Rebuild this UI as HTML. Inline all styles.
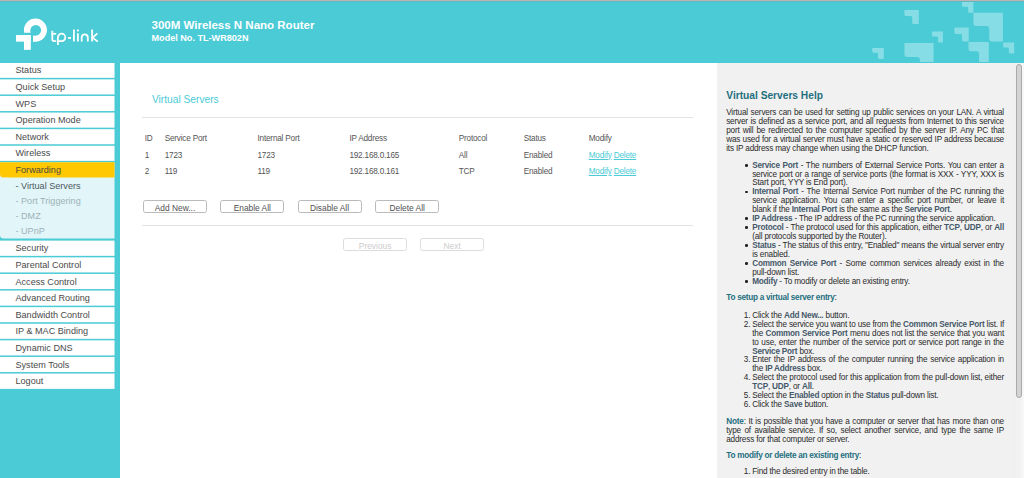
<!DOCTYPE html>
<html><head><meta charset="utf-8"><title>TP-Link</title>
<style>
html,body{margin:0;padding:0;width:1024px;height:478px;overflow:hidden;background:#fff;position:relative;font-family:'Liberation Sans',sans-serif}
b{font-weight:bold}
u{text-decoration:underline}
</style></head><body>
<svg style="position:absolute;left:0;top:0" width="120" height="478" viewBox="0 0 120 478"><rect x="0" y="62" width="120" height="416" fill="#4acbd6"/><rect x="0" y="62.50" width="114.5" height="15.35" fill="#fff"/><rect x="0" y="79.35" width="114.5" height="15.10" fill="#fff"/><rect x="0" y="95.95" width="114.5" height="15.10" fill="#fff"/><rect x="0" y="112.55" width="114.5" height="15.10" fill="#fff"/><rect x="0" y="129.15" width="114.5" height="15.10" fill="#fff"/><rect x="0" y="145.75" width="114.5" height="15.10" fill="#fff"/><path d="M0,162.35 H114.5 V238.6 H3.5 Q0,238.6 0,235.1 Z" fill="#e2f5f8"/><path d="M0,162.35 H114.5 V177.6 H3.5 Q0,177.6 0,174.1 Z" fill="#ffc800"/><rect x="0" y="240.60" width="114.5" height="15.25" fill="#fff"/><rect x="0" y="257.35" width="114.5" height="15.10" fill="#fff"/><rect x="0" y="273.95" width="114.5" height="15.10" fill="#fff"/><rect x="0" y="290.55" width="114.5" height="15.10" fill="#fff"/><rect x="0" y="307.15" width="114.5" height="15.10" fill="#fff"/><rect x="0" y="323.75" width="114.5" height="15.10" fill="#fff"/><rect x="0" y="340.35" width="114.5" height="15.10" fill="#fff"/><rect x="0" y="356.95" width="114.5" height="15.10" fill="#fff"/><rect x="0" y="373.55" width="114.5" height="15.35" fill="#fff"/></svg><div style="position:absolute;left:0;top:0;width:1024px;height:1px;background:#bcb5b5"></div>
<div style="position:absolute;left:0;top:1px;width:1024px;height:1px;background:#5fb9c3;z-index:2"></div>
<div style="position:absolute;left:0;top:1px;width:1024px;height:61.5px;background:#4acbd6;overflow:hidden">
<svg style="position:absolute;left:0;top:-1px" width="1024" height="62" viewBox="0 0 1024 62"><g fill="#86dde5"><path d="M904.4,9.9 H918.8 V24.1 H913.7 Q912.2,24.1 912.2,22.6 V17.6 Q912.2,16.1 910.7,16.1 H905.9 Q904.4,16.1 904.4,14.600000000000001 Z"/><path d="M932.0,31.4 H942.9 V42.5 H939.2 Q938.0,42.5 938.0,41.3 V37.6 Q938.0,36.4 936.8,36.4 H933.2 Q932.0,36.4 932.0,35.199999999999996 Z"/><path d="M904.4,43.1 H933.6 V70 H922.9 Q919.9,70 919.9,67 V59.9 Q919.9,56.9 916.9,56.9 H907.4 Q904.4,56.9 904.4,53.9 Z"/><path d="M872.3,47.9 H883.8 V58.9 H879.2 Q878.0,58.9 878.0,57.699999999999996 V54.0 Q878.0,52.8 876.8,52.8 H873.5 Q872.3,52.8 872.3,51.599999999999994 Z"/><path d="M962.1,-2 H973.4 V12.7 H969.3000000000001 Q968.1,12.7 968.1,11.5 V7.9 Q968.1,6.7 966.9,6.7 H963.3000000000001 Q962.1,6.7 962.1,5.5 Z"/><path d="M973.4,12.7 H1002.9 V41.5 H992.2 Q989.2,41.5 989.2,38.5 V29.1 Q989.2,26.1 986.2,26.1 H976.4 Q973.4,26.1 973.4,23.1 Z"/><path d="M954.4,27.4 H968.7 V41.5 H963.6 Q962.1,41.5 962.1,40.0 V35.6 Q962.1,34.1 960.6,34.1 H955.9 Q954.4,34.1 954.4,32.6 Z"/><path d="M968.5,42.1 H988.8 V70 H981.5 Q979.0,70 979.0,67.5 V53.7 Q979.0,51.2 976.5,51.2 H971.0 Q968.5,51.2 968.5,48.7 Z"/><path d="M1003.1,42.5 H1014.2 V53.5 H1010.1 Q1008.9,53.5 1008.9,52.3 V48.7 Q1008.9,47.5 1007.6999999999999,47.5 H1004.3000000000001 Q1003.1,47.5 1003.1,46.3 Z"/></g></svg>
</div>
<div style="position:absolute;left:0;top:0;width:120px;height:62px">
<svg style="position:absolute;left:0;top:0" width="120" height="62" viewBox="0 0 120 62">
 <g fill="#fff">
  <circle cx="35.45" cy="30.1" r="11.5"/>
  <rect x="24" y="28" width="6.6" height="4.6"/>
 </g>
 <rect x="18" y="32.75" width="15.0" height="14" fill="#4acbd6"/>
 <rect x="33.0" y="30" width="3" height="11.6" fill="#fff"/>
 <circle cx="35.75" cy="30.25" r="5.35" fill="#4acbd6"/>
 <rect x="30.6" y="30.25" width="5.15" height="5.35" fill="#4acbd6"/>
 <g fill="#fff">
  <rect x="16" y="35.05" width="14.8" height="6.6"/>
  <rect x="24" y="35.05" width="6.8" height="14.8"/>
 </g>
 <g fill="none" stroke="#fff" stroke-width="1.75" stroke-linecap="butt">
  <path d="M52.3,30.8 V39.3 Q52.3,41.2 54.2,41.2 H56.2"/>
  <path d="M51.4,33.8 H56.2"/>
  <path d="M57.9,45 V37.4 A3.7,3.7 0 1 1 61.6,41.1 H58.3"/>
  <path d="M68,37.9 H71"/>
  <path d="M73.9,29.4 V41.5"/>
  <path d="M77.9,33.3 V41.5"/>
  <path d="M81.7,41.5 V37 A3.1,3.1 0 0 1 87.8,37 V41.5"/>
  <path d="M92.1,29.4 V41.5"/>
  <path d="M97.4,33.4 L92.6,37.6 L97.8,41.6"/>
 </g>
 <rect x="77" y="29.5" width="1.8" height="1.9" fill="#fff"/>
</svg></div>
<div style="position:absolute;left:151.5px;top:17.99925px;font:bold 11.5px/14px 'Liberation Sans', sans-serif;color:#fff;white-space:nowrap">300M Wireless N Nano Router</div>
<div style="position:absolute;left:151.5px;top:32.99245px;font:bold 9.1px/11px 'Liberation Sans', sans-serif;color:#fff;white-space:nowrap">Model No. TL-WR802N</div>
<div style="position:absolute;left:15.5px;top:63.20px;font:9.1px/15.6px 'Liberation Sans', sans-serif;color:#4a4a4a;white-space:nowrap">Status</div><div style="position:absolute;left:15.5px;top:80.05px;font:9.1px/15.6px 'Liberation Sans', sans-serif;color:#4a4a4a;white-space:nowrap">Quick Setup</div><div style="position:absolute;left:15.5px;top:96.65px;font:9.1px/15.6px 'Liberation Sans', sans-serif;color:#4a4a4a;white-space:nowrap">WPS</div><div style="position:absolute;left:15.5px;top:113.25px;font:9.1px/15.6px 'Liberation Sans', sans-serif;color:#4a4a4a;white-space:nowrap">Operation Mode</div><div style="position:absolute;left:15.5px;top:129.85px;font:9.1px/15.6px 'Liberation Sans', sans-serif;color:#4a4a4a;white-space:nowrap">Network</div><div style="position:absolute;left:15.5px;top:146.45px;font:9.1px/15.6px 'Liberation Sans', sans-serif;color:#4a4a4a;white-space:nowrap">Wireless</div><div style="position:absolute;left:15.5px;top:163.35px;font:9.1px/15.5px 'Liberation Sans', sans-serif;color:#4a4a42;white-space:nowrap">Forwarding</div><div style="position:absolute;left:15.5px;top:178.70px;font:9.1px/15.25px 'Liberation Sans', sans-serif;color:#4c5861;white-space:nowrap">- Virtual Servers</div><div style="position:absolute;left:15.5px;top:193.95px;font:9.1px/15.25px 'Liberation Sans', sans-serif;color:#9db2b9;white-space:nowrap">- Port Triggering</div><div style="position:absolute;left:15.5px;top:209.20px;font:9.1px/15.25px 'Liberation Sans', sans-serif;color:#9db2b9;white-space:nowrap">- DMZ</div><div style="position:absolute;left:15.5px;top:224.45px;font:9.1px/15.25px 'Liberation Sans', sans-serif;color:#9db2b9;white-space:nowrap">- UPnP</div><div style="position:absolute;left:15.5px;top:241.30px;font:9.1px/15.6px 'Liberation Sans', sans-serif;color:#4a4a4a;white-space:nowrap">Security</div><div style="position:absolute;left:15.5px;top:258.05px;font:9.1px/15.6px 'Liberation Sans', sans-serif;color:#4a4a4a;white-space:nowrap">Parental Control</div><div style="position:absolute;left:15.5px;top:274.65px;font:9.1px/15.6px 'Liberation Sans', sans-serif;color:#4a4a4a;white-space:nowrap">Access Control</div><div style="position:absolute;left:15.5px;top:291.25px;font:9.1px/15.6px 'Liberation Sans', sans-serif;color:#4a4a4a;white-space:nowrap">Advanced Routing</div><div style="position:absolute;left:15.5px;top:307.85px;font:9.1px/15.6px 'Liberation Sans', sans-serif;color:#4a4a4a;white-space:nowrap">Bandwidth Control</div><div style="position:absolute;left:15.5px;top:324.45px;font:9.1px/15.6px 'Liberation Sans', sans-serif;color:#4a4a4a;white-space:nowrap">IP &amp; MAC Binding</div><div style="position:absolute;left:15.5px;top:341.05px;font:9.1px/15.6px 'Liberation Sans', sans-serif;color:#4a4a4a;white-space:nowrap">Dynamic DNS</div><div style="position:absolute;left:15.5px;top:357.65px;font:9.1px/15.6px 'Liberation Sans', sans-serif;color:#4a4a4a;white-space:nowrap">System Tools</div><div style="position:absolute;left:15.5px;top:374.25px;font:9.1px/15.6px 'Liberation Sans', sans-serif;color:#4a4a4a;white-space:nowrap">Logout</div><div style="position:absolute;left:152px;top:93.71px;font:normal 10.2px/12.24px 'Liberation Sans', sans-serif;color:#4acbd6;white-space:nowrap;letter-spacing:0px;">Virtual Servers</div><div style="position:absolute;left:142px;top:117px;width:551px;height:1px;background:#e0e4e3"></div><div style="position:absolute;left:144.7px;top:133.67px;font:normal 8.2px/9.84px 'Liberation Sans', sans-serif;color:#555555;white-space:nowrap;letter-spacing:-0.2px;">ID</div><div style="position:absolute;left:164.7px;top:133.67px;font:normal 8.2px/9.84px 'Liberation Sans', sans-serif;color:#555555;white-space:nowrap;letter-spacing:-0.2px;">Service Port</div><div style="position:absolute;left:257.5px;top:133.67px;font:normal 8.2px/9.84px 'Liberation Sans', sans-serif;color:#555555;white-space:nowrap;letter-spacing:-0.2px;">Internal Port</div><div style="position:absolute;left:349.4px;top:133.67px;font:normal 8.2px/9.84px 'Liberation Sans', sans-serif;color:#555555;white-space:nowrap;letter-spacing:-0.2px;">IP Address</div><div style="position:absolute;left:458.75px;top:133.67px;font:normal 8.2px/9.84px 'Liberation Sans', sans-serif;color:#555555;white-space:nowrap;letter-spacing:-0.2px;">Protocol</div><div style="position:absolute;left:523.75px;top:133.67px;font:normal 8.2px/9.84px 'Liberation Sans', sans-serif;color:#555555;white-space:nowrap;letter-spacing:-0.2px;">Status</div><div style="position:absolute;left:588.75px;top:133.67px;font:normal 8.2px/9.84px 'Liberation Sans', sans-serif;color:#555555;white-space:nowrap;letter-spacing:-0.2px;">Modify</div><div style="position:absolute;left:144.7px;top:150.57px;font:normal 8.2px/9.84px 'Liberation Sans', sans-serif;color:#555555;white-space:nowrap;letter-spacing:-0.2px;">1</div><div style="position:absolute;left:164.7px;top:150.57px;font:normal 8.2px/9.84px 'Liberation Sans', sans-serif;color:#555555;white-space:nowrap;letter-spacing:-0.2px;">1723</div><div style="position:absolute;left:257.5px;top:150.57px;font:normal 8.2px/9.84px 'Liberation Sans', sans-serif;color:#555555;white-space:nowrap;letter-spacing:-0.2px;">1723</div><div style="position:absolute;left:349.4px;top:150.57px;font:normal 8.2px/9.84px 'Liberation Sans', sans-serif;color:#555555;white-space:nowrap;letter-spacing:-0.2px;">192.168.0.165</div><div style="position:absolute;left:458.75px;top:150.57px;font:normal 8.2px/9.84px 'Liberation Sans', sans-serif;color:#555555;white-space:nowrap;letter-spacing:-0.2px;">All</div><div style="position:absolute;left:523.75px;top:150.57px;font:normal 8.2px/9.84px 'Liberation Sans', sans-serif;color:#555555;white-space:nowrap;letter-spacing:-0.2px;">Enabled</div><div style="position:absolute;left:588.75px;top:150.57px;font:normal 8.2px/9.84px 'Liberation Sans', sans-serif;color:#4acbd6;white-space:nowrap;letter-spacing:-0.2px;"><u>Modify</u> <u>Delete</u></div><div style="position:absolute;left:144.7px;top:166.97px;font:normal 8.2px/9.84px 'Liberation Sans', sans-serif;color:#555555;white-space:nowrap;letter-spacing:-0.2px;">2</div><div style="position:absolute;left:164.7px;top:166.97px;font:normal 8.2px/9.84px 'Liberation Sans', sans-serif;color:#555555;white-space:nowrap;letter-spacing:-0.2px;">119</div><div style="position:absolute;left:257.5px;top:166.97px;font:normal 8.2px/9.84px 'Liberation Sans', sans-serif;color:#555555;white-space:nowrap;letter-spacing:-0.2px;">119</div><div style="position:absolute;left:349.4px;top:166.97px;font:normal 8.2px/9.84px 'Liberation Sans', sans-serif;color:#555555;white-space:nowrap;letter-spacing:-0.2px;">192.168.0.161</div><div style="position:absolute;left:458.75px;top:166.97px;font:normal 8.2px/9.84px 'Liberation Sans', sans-serif;color:#555555;white-space:nowrap;letter-spacing:-0.2px;">TCP</div><div style="position:absolute;left:523.75px;top:166.97px;font:normal 8.2px/9.84px 'Liberation Sans', sans-serif;color:#555555;white-space:nowrap;letter-spacing:-0.2px;">Enabled</div><div style="position:absolute;left:588.75px;top:166.97px;font:normal 8.2px/9.84px 'Liberation Sans', sans-serif;color:#4acbd6;white-space:nowrap;letter-spacing:-0.2px;"><u>Modify</u> <u>Delete</u></div><div style="position:absolute;left:143px;top:200px;width:62px;height:10.8px;border:1px solid #bababa;border-radius:2.5px;background:#fff;font:8.4px/14px 'Liberation Sans', sans-serif;color:#505050;text-align:center;white-space:nowrap;overflow:hidden">Add New...</div><div style="position:absolute;left:220.3px;top:200px;width:62px;height:10.8px;border:1px solid #bababa;border-radius:2.5px;background:#fff;font:8.4px/14px 'Liberation Sans', sans-serif;color:#505050;text-align:center;white-space:nowrap;overflow:hidden">Enable All</div><div style="position:absolute;left:297.5px;top:200px;width:62px;height:10.8px;border:1px solid #bababa;border-radius:2.5px;background:#fff;font:8.4px/14px 'Liberation Sans', sans-serif;color:#505050;text-align:center;white-space:nowrap;overflow:hidden">Disable All</div><div style="position:absolute;left:375.2px;top:200px;width:62px;height:10.8px;border:1px solid #bababa;border-radius:2.5px;background:#fff;font:8.4px/14px 'Liberation Sans', sans-serif;color:#505050;text-align:center;white-space:nowrap;overflow:hidden">Delete All</div><div style="position:absolute;left:142px;top:225px;width:551px;height:1px;background:#e0e4e3"></div><div style="position:absolute;left:343.1px;top:238.1px;width:62px;height:10.5px;border:1px solid #dcdcdc;border-radius:2.5px;background:#fff;font:8.4px/14.2px 'Liberation Sans', sans-serif;color:#cbcbcb;text-align:center;white-space:nowrap;overflow:hidden">Previous</div><div style="position:absolute;left:420.2px;top:238.1px;width:62px;height:10.5px;border:1px solid #dcdcdc;border-radius:2.5px;background:#fff;font:8.4px/14.2px 'Liberation Sans', sans-serif;color:#cbcbcb;text-align:center;white-space:nowrap;overflow:hidden">Next</div><div style="position:absolute;left:716.7px;top:62.5px;width:297.3px;height:416px;background:#f1f1f1"></div><div style="position:absolute;left:1014px;top:62.5px;width:10px;height:416px;background:linear-gradient(90deg,#eeeeee 0,#f2f2f2 2px,#f2f2f2 7px,#f7f7f7 8px);box-sizing:border-box"></div><div style="position:absolute;left:1016px;top:64.2px;width:5.8px;height:333.5px;background:#d3d3d3;border:1px solid #a9a9a9;border-radius:3px;box-sizing:border-box"></div><div style="position:absolute;left:726.3px;top:89.81px;font:bold 10.2px/12.24px 'Liberation Sans', sans-serif;color:#1f6f7f;white-space:nowrap;letter-spacing:0px;">Virtual Servers Help</div><div style="position:absolute;left:726.2px;top:108.49px;width:277.8px;font:8.2px/9.0px 'Liberation Sans', sans-serif;color:#2b2b2b;white-space:nowrap;letter-spacing:-0.18px;text-align:justify;text-align-last:justify;">Virtual servers can be used for setting up public services on your LAN. A virtual</div><div style="position:absolute;left:726.2px;top:117.37px;width:277.8px;font:8.2px/9.0px 'Liberation Sans', sans-serif;color:#2b2b2b;white-space:nowrap;letter-spacing:-0.18px;text-align:justify;text-align-last:justify;">server is defined as a service port, and all requests from Internet to this service</div><div style="position:absolute;left:726.2px;top:126.25px;width:277.8px;font:8.2px/9.0px 'Liberation Sans', sans-serif;color:#2b2b2b;white-space:nowrap;letter-spacing:-0.18px;text-align:justify;text-align-last:justify;">port will be redirected to the computer specified by the server IP. Any PC that</div><div style="position:absolute;left:726.2px;top:135.13px;width:277.8px;font:8.2px/9.0px 'Liberation Sans', sans-serif;color:#2b2b2b;white-space:nowrap;letter-spacing:-0.18px;text-align:justify;text-align-last:justify;">was used for a virtual server must have a static or reserved IP address because</div><div style="position:absolute;left:726.2px;top:144.01px;width:277.8px;font:8.2px/9.0px 'Liberation Sans', sans-serif;color:#2b2b2b;white-space:nowrap;letter-spacing:-0.18px;">its IP address may change when using the DHCP function.</div><div style="position:absolute;left:745.4px;top:163.90px;width:2.7px;height:2.7px;border-radius:50%;background:#222"></div><div style="position:absolute;left:752.2px;top:160.59px;width:251.8px;font:8.2px/9.0px 'Liberation Sans', sans-serif;color:#2b2b2b;white-space:nowrap;letter-spacing:-0.18px;text-align:justify;text-align-last:justify;"><b style="color:#46596a;letter-spacing:-0.22px">Service Port</b> - The numbers of External Service Ports. You can enter a</div><div style="position:absolute;left:752.2px;top:169.52px;width:251.8px;font:8.2px/9.0px 'Liberation Sans', sans-serif;color:#2b2b2b;white-space:nowrap;letter-spacing:-0.18px;text-align:justify;text-align-last:justify;">service port or a range of service ports (the format is XXX - YYY, XXX is</div><div style="position:absolute;left:752.2px;top:178.45px;width:251.8px;font:8.2px/9.0px 'Liberation Sans', sans-serif;color:#2b2b2b;white-space:nowrap;letter-spacing:-0.18px;">Start port, YYY is End port).</div><div style="position:absolute;left:745.4px;top:190.69px;width:2.7px;height:2.7px;border-radius:50%;background:#222"></div><div style="position:absolute;left:752.2px;top:187.38px;width:251.8px;font:8.2px/9.0px 'Liberation Sans', sans-serif;color:#2b2b2b;white-space:nowrap;letter-spacing:-0.18px;text-align:justify;text-align-last:justify;"><b style="color:#46596a;letter-spacing:-0.22px">Internal Port</b> - The Internal Service Port number of the PC running the</div><div style="position:absolute;left:752.2px;top:196.31px;width:251.8px;font:8.2px/9.0px 'Liberation Sans', sans-serif;color:#2b2b2b;white-space:nowrap;letter-spacing:-0.18px;text-align:justify;text-align-last:justify;">service application. You can enter a specific port number, or leave it</div><div style="position:absolute;left:752.2px;top:205.24px;width:251.8px;font:8.2px/9.0px 'Liberation Sans', sans-serif;color:#2b2b2b;white-space:nowrap;letter-spacing:-0.18px;">blank if the <b style="color:#46596a;letter-spacing:-0.22px">Internal Port</b> is the same as the <b style="color:#46596a;letter-spacing:-0.22px">Service Port</b>.</div><div style="position:absolute;left:745.4px;top:217.48px;width:2.7px;height:2.7px;border-radius:50%;background:#222"></div><div style="position:absolute;left:752.2px;top:214.17px;width:251.8px;font:8.2px/9.0px 'Liberation Sans', sans-serif;color:#2b2b2b;white-space:nowrap;letter-spacing:-0.18px;"><b style="color:#46596a;letter-spacing:-0.22px">IP Address</b> - The IP address of the PC running the service application.</div><div style="position:absolute;left:745.4px;top:226.41px;width:2.7px;height:2.7px;border-radius:50%;background:#222"></div><div style="position:absolute;left:752.2px;top:223.10px;width:251.8px;font:8.2px/9.0px 'Liberation Sans', sans-serif;color:#2b2b2b;white-space:nowrap;letter-spacing:-0.18px;text-align:justify;text-align-last:justify;"><b style="color:#46596a;letter-spacing:-0.22px">Protocol</b> - The protocol used for this application, either <b style="color:#46596a;letter-spacing:-0.22px">TCP</b>, <b style="color:#46596a;letter-spacing:-0.22px">UDP</b>, or <b style="color:#46596a;letter-spacing:-0.22px">All</b></div><div style="position:absolute;left:752.2px;top:232.03px;width:251.8px;font:8.2px/9.0px 'Liberation Sans', sans-serif;color:#2b2b2b;white-space:nowrap;letter-spacing:-0.18px;">(all protocols supported by the Router).</div><div style="position:absolute;left:745.4px;top:244.27px;width:2.7px;height:2.7px;border-radius:50%;background:#222"></div><div style="position:absolute;left:752.2px;top:240.96px;width:251.8px;font:8.2px/9.0px 'Liberation Sans', sans-serif;color:#2b2b2b;white-space:nowrap;letter-spacing:-0.18px;text-align:justify;text-align-last:justify;"><b style="color:#46596a;letter-spacing:-0.22px">Status</b> - The status of this entry, "Enabled" means the virtual server entry</div><div style="position:absolute;left:752.2px;top:249.89px;width:251.8px;font:8.2px/9.0px 'Liberation Sans', sans-serif;color:#2b2b2b;white-space:nowrap;letter-spacing:-0.18px;">is enabled.</div><div style="position:absolute;left:745.4px;top:262.13px;width:2.7px;height:2.7px;border-radius:50%;background:#222"></div><div style="position:absolute;left:752.2px;top:258.82px;width:251.8px;font:8.2px/9.0px 'Liberation Sans', sans-serif;color:#2b2b2b;white-space:nowrap;letter-spacing:-0.18px;text-align:justify;text-align-last:justify;"><b style="color:#46596a;letter-spacing:-0.22px">Common Service Port</b> - Some common services already exist in the</div><div style="position:absolute;left:752.2px;top:267.75px;width:251.8px;font:8.2px/9.0px 'Liberation Sans', sans-serif;color:#2b2b2b;white-space:nowrap;letter-spacing:-0.18px;">pull-down list.</div><div style="position:absolute;left:745.4px;top:279.99px;width:2.7px;height:2.7px;border-radius:50%;background:#222"></div><div style="position:absolute;left:752.2px;top:276.68px;width:251.8px;font:8.2px/9.0px 'Liberation Sans', sans-serif;color:#2b2b2b;white-space:nowrap;letter-spacing:-0.18px;"><b style="color:#46596a;letter-spacing:-0.22px">Modify</b> - To modify or delete an existing entry.</div><div style="position:absolute;left:726.3px;top:293.49px;font:8.2px/9.0px 'Liberation Sans', sans-serif;color:#2b2b2b;white-space:nowrap"><b style="color:#1f6f7f;letter-spacing:-0.26px">To setup a virtual server entry</b>:</div><div style="position:absolute;left:720px;top:310.79px;width:30.5px;text-align:right;font:8.2px/9.0px 'Liberation Sans', sans-serif;color:#2b2b2b">1.</div><div style="position:absolute;left:752.2px;top:310.79px;width:251.8px;font:8.2px/9.0px 'Liberation Sans', sans-serif;color:#2b2b2b;white-space:nowrap;letter-spacing:-0.18px;">Click the <b style="color:#46596a;letter-spacing:-0.22px">Add New...</b> button.</div><div style="position:absolute;left:720px;top:319.72px;width:30.5px;text-align:right;font:8.2px/9.0px 'Liberation Sans', sans-serif;color:#2b2b2b">2.</div><div style="position:absolute;left:752.2px;top:319.72px;width:251.8px;font:8.2px/9.0px 'Liberation Sans', sans-serif;color:#2b2b2b;white-space:nowrap;letter-spacing:-0.18px;text-align:justify;text-align-last:justify;">Select the service you want to use from the <b style="color:#46596a;letter-spacing:-0.22px">Common Service Port</b> list. If</div><div style="position:absolute;left:752.2px;top:328.65px;width:251.8px;font:8.2px/9.0px 'Liberation Sans', sans-serif;color:#2b2b2b;white-space:nowrap;letter-spacing:-0.18px;text-align:justify;text-align-last:justify;">the <b style="color:#46596a;letter-spacing:-0.22px">Common Service Port</b> menu does not list the service that you want</div><div style="position:absolute;left:752.2px;top:337.58px;width:251.8px;font:8.2px/9.0px 'Liberation Sans', sans-serif;color:#2b2b2b;white-space:nowrap;letter-spacing:-0.18px;text-align:justify;text-align-last:justify;">to use, enter the number of the service port or service port range in the</div><div style="position:absolute;left:752.2px;top:346.51px;width:251.8px;font:8.2px/9.0px 'Liberation Sans', sans-serif;color:#2b2b2b;white-space:nowrap;letter-spacing:-0.18px;"><b style="color:#46596a;letter-spacing:-0.22px">Service Port</b> box.</div><div style="position:absolute;left:720px;top:355.44px;width:30.5px;text-align:right;font:8.2px/9.0px 'Liberation Sans', sans-serif;color:#2b2b2b">3.</div><div style="position:absolute;left:752.2px;top:355.44px;width:251.8px;font:8.2px/9.0px 'Liberation Sans', sans-serif;color:#2b2b2b;white-space:nowrap;letter-spacing:-0.18px;text-align:justify;text-align-last:justify;">Enter the IP address of the computer running the service application in</div><div style="position:absolute;left:752.2px;top:364.37px;width:251.8px;font:8.2px/9.0px 'Liberation Sans', sans-serif;color:#2b2b2b;white-space:nowrap;letter-spacing:-0.18px;">the <b style="color:#46596a;letter-spacing:-0.22px">IP Address</b> box.</div><div style="position:absolute;left:720px;top:373.30px;width:30.5px;text-align:right;font:8.2px/9.0px 'Liberation Sans', sans-serif;color:#2b2b2b">4.</div><div style="position:absolute;left:752.2px;top:373.30px;width:251.8px;font:8.2px/9.0px 'Liberation Sans', sans-serif;color:#2b2b2b;white-space:nowrap;letter-spacing:-0.18px;text-align:justify;text-align-last:justify;">Select the protocol used for this application from the pull-down list, either</div><div style="position:absolute;left:752.2px;top:382.23px;width:251.8px;font:8.2px/9.0px 'Liberation Sans', sans-serif;color:#2b2b2b;white-space:nowrap;letter-spacing:-0.18px;"><b style="color:#46596a;letter-spacing:-0.22px">TCP</b>, <b style="color:#46596a;letter-spacing:-0.22px">UDP</b>, or <b style="color:#46596a;letter-spacing:-0.22px">All</b>.</div><div style="position:absolute;left:720px;top:391.16px;width:30.5px;text-align:right;font:8.2px/9.0px 'Liberation Sans', sans-serif;color:#2b2b2b">5.</div><div style="position:absolute;left:752.2px;top:391.16px;width:251.8px;font:8.2px/9.0px 'Liberation Sans', sans-serif;color:#2b2b2b;white-space:nowrap;letter-spacing:-0.18px;">Select the <b style="color:#46596a;letter-spacing:-0.22px">Enabled</b> option in the <b style="color:#46596a;letter-spacing:-0.22px">Status</b> pull-down list.</div><div style="position:absolute;left:720px;top:400.09px;width:30.5px;text-align:right;font:8.2px/9.0px 'Liberation Sans', sans-serif;color:#2b2b2b">6.</div><div style="position:absolute;left:752.2px;top:400.09px;width:251.8px;font:8.2px/9.0px 'Liberation Sans', sans-serif;color:#2b2b2b;white-space:nowrap;letter-spacing:-0.18px;">Click the <b style="color:#46596a;letter-spacing:-0.22px">Save</b> button.</div><div style="position:absolute;left:726.2px;top:417.19px;width:277.8px;font:8.2px/9.0px 'Liberation Sans', sans-serif;color:#2b2b2b;white-space:nowrap;letter-spacing:-0.18px;text-align:justify;text-align-last:justify;"><b style="color:#1f6f7f">Note</b>: It is possible that you have a computer or server that has more than one</div><div style="position:absolute;left:726.2px;top:425.94px;width:277.8px;font:8.2px/9.0px 'Liberation Sans', sans-serif;color:#2b2b2b;white-space:nowrap;letter-spacing:-0.18px;text-align:justify;text-align-last:justify;">type of available service. If so, select another service, and type the same IP</div><div style="position:absolute;left:726.2px;top:434.69px;width:277.8px;font:8.2px/9.0px 'Liberation Sans', sans-serif;color:#2b2b2b;white-space:nowrap;letter-spacing:-0.18px;">address for that computer or server.</div><div style="position:absolute;left:726.3px;top:451.39px;font:8.2px/9.0px 'Liberation Sans', sans-serif;color:#2b2b2b;white-space:nowrap"><b style="color:#1f6f7f;letter-spacing:-0.26px">To modify or delete an existing entry</b>:</div><div style="position:absolute;left:720px;top:466.99px;width:30.5px;text-align:right;font:8.2px/9.0px 'Liberation Sans', sans-serif;color:#2b2b2b">1.</div><div style="position:absolute;left:752.2px;top:466.99px;width:251.8px;font:8.2px/9.0px 'Liberation Sans', sans-serif;color:#2b2b2b;white-space:nowrap;letter-spacing:-0.18px;">Find the desired entry in the table.</div>
</body></html>
